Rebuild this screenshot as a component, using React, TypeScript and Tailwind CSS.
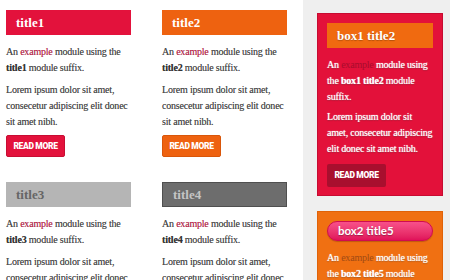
import React from "react";

const SERIF = "font-['Liberation_Serif','Times_New_Roman',serif]";
const bodyText =
  "shrink-0 text-[10px] leading-[16px] tracking-[-0.2px] text-[#4a4a4a] [text-shadow:0_0_0.5px_rgba(60,60,60,0.6)]";

function Column({ title, barClass, titleClass }: { title: string; barClass: string; titleClass: string }) {
  return (
    <div className={`w-[125px] flex flex-col shrink-0 ${SERIF}`}>
      <div className={`h-[25px] shrink-0 flex items-center pl-[10px] ${barClass}`}>
        <span className={`text-[13px] leading-none ${titleClass}`}>{title}</span>
      </div>
      <p className={`mt-[9px] ${bodyText}`}>
        An <span className="text-[#c7254e]">example</span> module using the{" "}
        <b className="text-[#333]">{title}</b> module suffix.
      </p>
      <p className={`mt-[6px] ${bodyText}`}>
        Lorem ipsum dolor sit amet, consecetur adipiscing elit donec sit amet nibh.
      </p>
    </div>
  );
}

function ReadMore({ cls }: { cls: string }) {
  return (
    <div
      className={`shrink-0 mt-[5px] h-[22px] w-[59px] rounded-[2px] flex items-center justify-center text-white text-[8.5px] font-black uppercase tracking-[-0.35px] font-['Roboto','Liberation_Sans',sans-serif] ${cls}`}
    >
      Read more
    </div>
  );
}

const boxText =
  "shrink-0 text-[10px] leading-[16px] tracking-[-0.2px] text-white [text-shadow:0_0_1px_rgba(255,255,255,0.9),0_1px_1px_rgba(0,0,0,0.3)]";

export default function App() {
  return (
    <div className={`w-[450px] h-[280px] overflow-hidden flex items-start bg-white ${SERIF}`}>
      <div className="w-[303px] h-[280px] pl-[6px] pt-[10px] flex items-start gap-[31px] shrink-0">
        <div className="flex flex-col w-[125px] shrink-0">
          <Column title="title1" barClass="bg-[#e3123c]" titleClass="text-white font-bold" />
          <ReadMore cls="bg-[#e3123c] border border-[#c80d33]" />
          <div className="mt-[25px] shrink-0">
            <Column title="title3" barClass="bg-[#b5b5b5]" titleClass="text-[#666] font-bold" />
          </div>
        </div>
        <div className="flex flex-col w-[125px] shrink-0">
          <Column title="title2" barClass="bg-[#ee6210]" titleClass="text-white font-bold" />
          <ReadMore cls="bg-[#ee6210] border border-[#d9560a]" />
          <div className="mt-[25px] shrink-0">
            <Column title="title4" barClass="bg-[#6d6d6d] border border-[#4f4f4f]" titleClass="text-[#c4c4c4] font-bold" />
          </div>
        </div>
      </div>
      <div className="flex-1 h-[280px] bg-[#efefef] pl-[14px] pt-[13px] pr-[7px] flex flex-col">
        <div className="shrink-0 w-[126px] bg-[#e3113a] border border-[#c70b31] px-[9px] pt-[9px] pb-[8px] flex flex-col">
          <div className="shrink-0 h-[25px] bg-[#f06a10] flex items-center pl-[10px]">
            <span className="text-[13px] font-bold text-white leading-none [text-shadow:0_1px_1px_rgba(0,0,0,0.25)]">box1 title2</span>
          </div>
          <p className={`mt-[9px] ${boxText}`}>
            An <span className="text-[#a80c2c] [text-shadow:none]">example</span> module using the{" "}
            <b>box1 title2</b> module suffix.
          </p>
          <p className={`mt-[4px] ${boxText}`}>
            Lorem ipsum dolor sit amet, consecetur adipiscing elit donec sit amet nibh.
          </p>
          <div className="shrink-0 mt-[7px] h-[23px] w-[59px] rounded-[2px] flex items-center justify-center text-white text-[8.5px] font-black uppercase tracking-[-0.35px] bg-[#a80f2e] font-['Roboto','Liberation_Sans',sans-serif]">
            Read more
          </div>
        </div>
        <div className="shrink-0 mt-[15px] w-[126px] bg-[#f07012] border border-[#e06208] px-[9px] pt-[9px] pb-[10px] flex flex-col">
          <div className="shrink-0 h-[20px] rounded-full bg-gradient-to-b from-[#f8508a] to-[#e0105a] border border-[#d00c50] flex items-center pl-[10px] shadow-[0_1px_1px_rgba(0,0,0,0.2)] font-['Lato','Open_Sans',sans-serif]">
            <span className="text-[11.5px] font-bold text-white leading-none [text-shadow:0_1px_1px_rgba(0,0,0,0.3)]">box2 title5</span>
          </div>
          <p className={`mt-[9px] ${boxText}`}>
            An <span className="text-[#a04a14] [text-shadow:none]">example</span> module using the{" "}
            <b>box2 title5</b> module suffix.
          </p>
        </div>
      </div>
    </div>
  );
}
